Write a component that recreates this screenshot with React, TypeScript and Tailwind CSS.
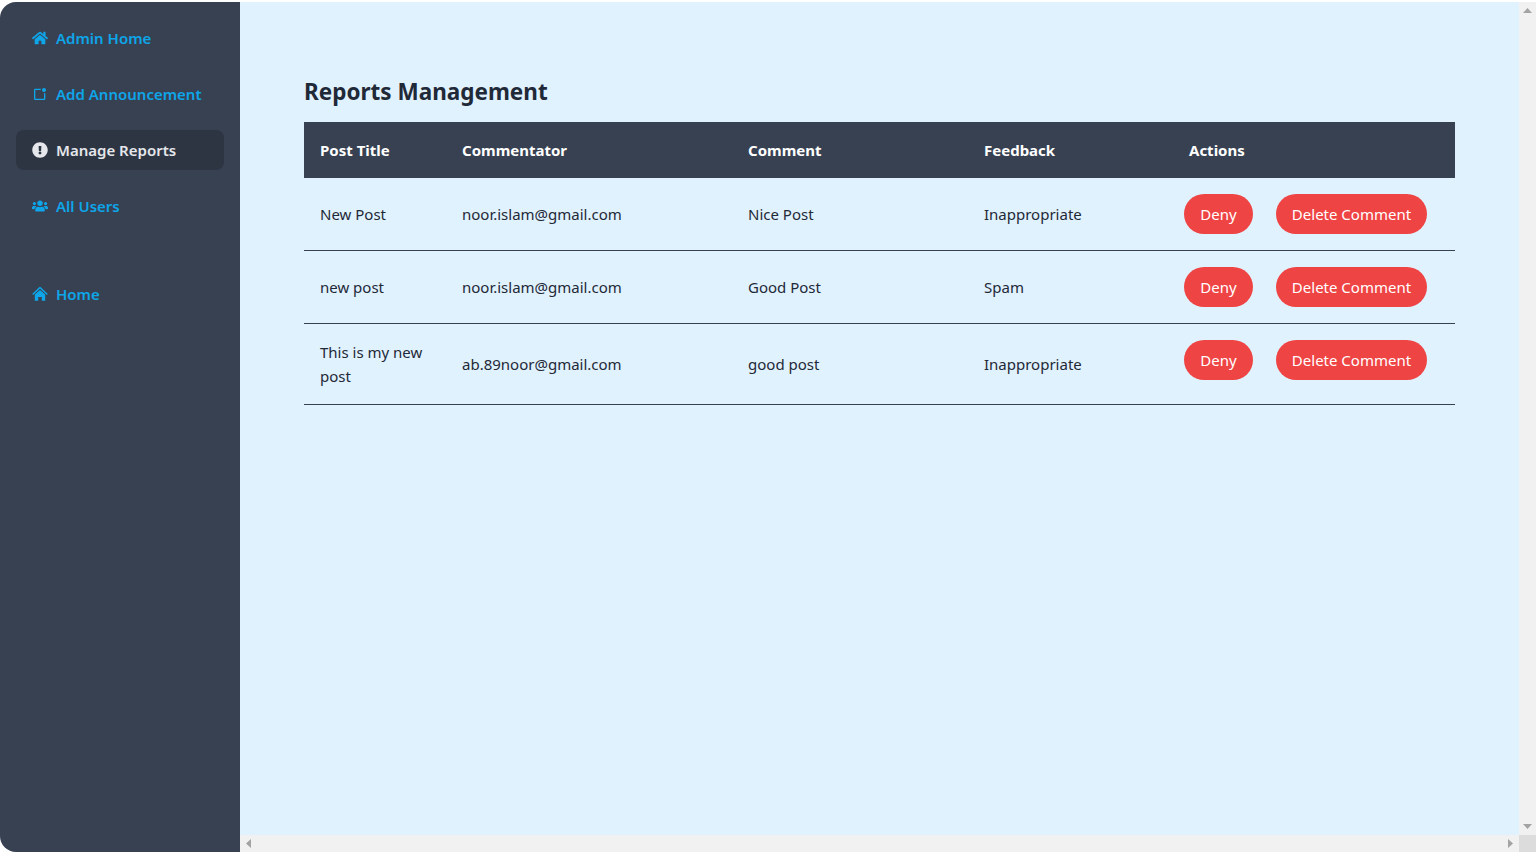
import { FaHome, FaExclamationCircle, FaUsers } from "react-icons/fa";
import { BiNotification } from "react-icons/bi";

const rows = [
  { title: "New Post", user: "noor.islam@gmail.com", comment: "Nice Post", feedback: "Inappropriate" },
  { title: "new post", user: "noor.islam@gmail.com", comment: "Good Post", feedback: "Spam" },
  { title: "This is my new post", user: "ab.89noor@gmail.com", comment: "good post", feedback: "Inappropriate" },
];

function HomeIcon() {
  return (
    <svg width="16" height="16" viewBox="0 0 16 16" fill="currentColor">
      <path d="M1.2 8L8 1.5 14.8 8" fill="none" stroke="currentColor" strokeWidth="1.6" strokeLinecap="round" strokeLinejoin="round" />
      <path d="M2.8 8.6L8 3.9l5.2 4.7v6.2H9.8v-3.9H6.2v3.9H2.8z" />
    </svg>
  );
}

function NavItem({ icon, label, active }: { icon: React.ReactNode; label: string; active?: boolean }) {
  return (
    <a className={`flex h-10 items-center gap-2 rounded-lg px-4 text-[15px] font-semibold ${active ? "bg-[#2d3543] text-[#e5e7eb]" : "text-[#0ea5e9]"}`}>
      <span className="flex w-4 justify-center text-base">{icon}</span>
      {label}
    </a>
  );
}

export default function App() {
  return (
    <div className="h-[854px] w-[1540px] overflow-hidden bg-white pt-[2px] pr-1 pb-[2px] font-['Noto_Sans','Open_Sans',sans-serif]">
      <div className="flex h-[850px]">
        <aside className="flex w-60 shrink-0 flex-col gap-4 rounded-l-2xl bg-[#374151] px-4 pt-4">
          <NavItem icon={<FaHome />} label="Admin Home" />
          <NavItem icon={<BiNotification />} label="Add Announcement" />
          <NavItem icon={<FaExclamationCircle />} label="Manage Reports" active />
          <NavItem icon={<FaUsers />} label="All Users" />
          <div className="mt-8">
            <NavItem icon={<HomeIcon />} label="Home" />
          </div>
        </aside>
        <div className="flex min-w-0 flex-1 flex-col">
          <div className="flex min-h-0 flex-1">
            <main className="flex-1 bg-[#e0f2fe] pt-[74px] pl-16">
              <h2 className="h-[46px] text-[22.5px] leading-8 font-bold text-[#1f2937]">Reports Management</h2>
              <table className="w-[1151px] table-fixed border-collapse text-left text-[15px] leading-6 text-[#1f2937]">
                <colgroup>
                  <col className="w-[142px]" />
                  <col className="w-[286px]" />
                  <col className="w-[236px]" />
                  <col className="w-[205px]" />
                  <col />
                </colgroup>
                <thead>
                  <tr className="h-14 bg-[#374151] text-white">
                    {["Post Title", "Commentator", "Comment", "Feedback", "Actions"].map((h) => (
                      <th key={h} className="px-4 font-bold">{h}</th>
                    ))}
                  </tr>
                </thead>
                <tbody>
                  {rows.map((r) => (
                    <tr key={r.comment} className="border-b border-[#374151]">
                      <td className="p-4">{r.title}</td>
                      <td className="p-4">{r.user}</td>
                      <td className="p-4">{r.comment}</td>
                      <td className="p-4">{r.feedback}</td>
                      <td className="py-4 pl-[11px] align-top">
                        <div className="flex gap-[23px]">
                          <button className="h-10 w-[69px] rounded-full bg-[#ef4444] text-white">Deny</button>
                          <button className="h-10 w-[151px] rounded-full bg-[#ef4444] text-white">Delete Comment</button>
                        </div>
                      </td>
                    </tr>
                  ))}
                </tbody>
              </table>
            </main>
            <div className="flex w-[17px] shrink-0 flex-col items-center justify-between bg-[#f1f1f1] py-[6px]">
              <svg width="9" height="5" viewBox="0 0 9 5"><path d="M4.5 0L9 5H0z" fill="#a3a3a3" /></svg>
              <svg width="9" height="5" viewBox="0 0 9 5"><path d="M0 0h9L4.5 5z" fill="#a3a3a3" /></svg>
            </div>
          </div>
          <div className="flex h-[17px] shrink-0">
            <div className="flex flex-1 items-center justify-between bg-[#f1f1f1] px-[6px]">
              <svg width="5" height="9" viewBox="0 0 5 9"><path d="M5 0v9L0 4.5z" fill="#a3a3a3" /></svg>
              <svg width="5" height="9" viewBox="0 0 5 9"><path d="M0 0l5 4.5L0 9z" fill="#a3a3a3" /></svg>
            </div>
            <div className="w-[17px] bg-[#dcdcdc]" />
          </div>
        </div>
      </div>
    </div>
  );
}
